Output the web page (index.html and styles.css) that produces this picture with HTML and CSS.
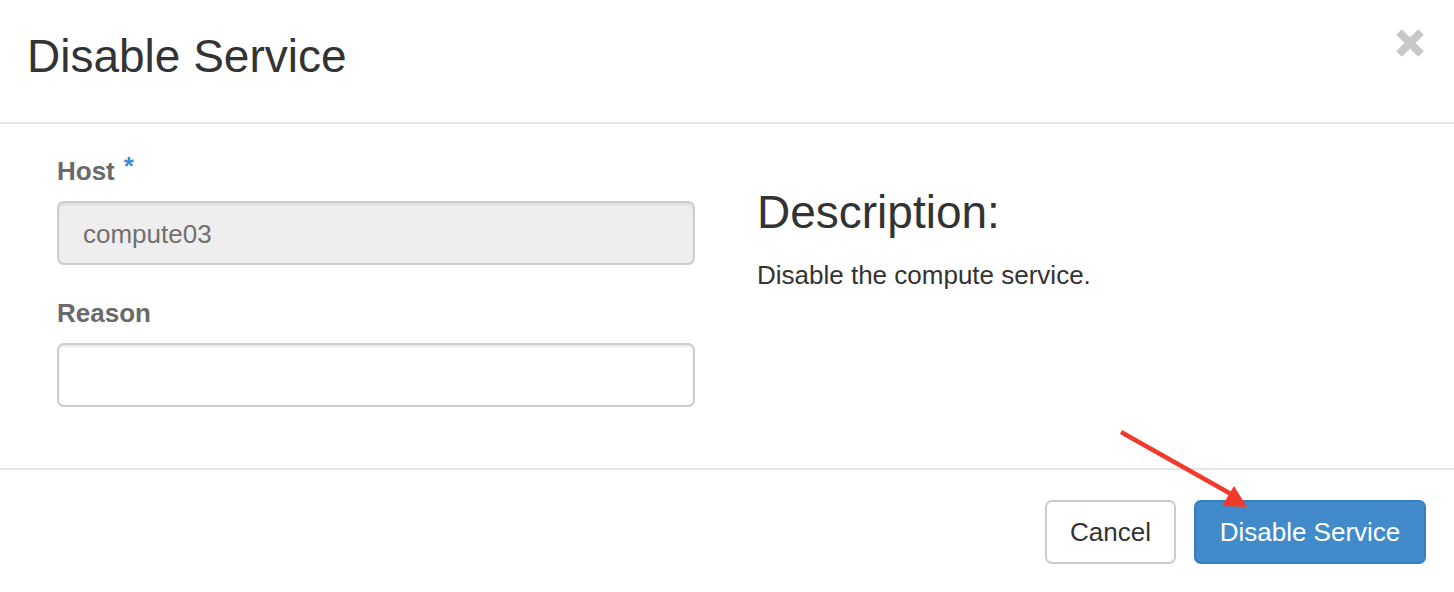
FILE: index.html
```html
<!DOCTYPE html>
<html lang="en">
<head>
<meta charset="utf-8">
<title>Disable Service</title>
<link rel="stylesheet" href="styles.css">
</head>
<body>
<div class="modal">
  <div class="modal-header">
    <h3 class="modal-title">Disable Service</h3>
    <button class="close" type="button" aria-label="Close">
      <svg width="28" height="28" viewBox="0 0 28 28">
        <line x1="3" y1="3" x2="25" y2="25" />
        <line x1="25" y1="3" x2="3" y2="25" />
      </svg>
    </button>
  </div>
  <div class="modal-body">
    <div class="left">
      <div class="form-group">
        <label class="control-label">Host<span class="req">*</span></label>
        <input class="form-control disabled" type="text" value="compute03" disabled>
      </div>
      <div class="form-group reason">
        <label class="control-label">Reason</label>
        <input class="form-control" type="text">
      </div>
    </div>
    <div class="right">
      <h3 class="desc-title">Description:</h3>
      <p class="desc-text">Disable the compute service.</p>
    </div>
  </div>
  <div class="modal-footer">
    <button class="btn btn-default" type="button">Cancel</button>
    <button class="btn btn-primary" type="button">Disable Service</button>
  </div>
  <svg class="annotation" width="1454" height="592" viewBox="0 0 1454 592">
    <line x1="1121" y1="432" x2="1231" y2="494" />
    <polygon points="1234,486 1222,506 1247,507" />
  </svg>
</div>
</body>
</html>
```

FILE: styles.css
```css
* {
  box-sizing: border-box;
}

html, body {
  margin: 0;
  padding: 0;
  background: #ffffff;
}

body {
  font-family: "Liberation Sans", Arial, Helvetica, sans-serif;
  color: #333333;
}

.modal {
  position: relative;
  width: 1454px;
  height: 592px;
  background: #ffffff;
  display: flex;
  flex-direction: column;
}

.modal-header {
  height: 124px;
  flex: none;
  display: flex;
  justify-content: space-between;
  align-items: flex-start;
  padding: 0 30px 0 27px;
  border-bottom: 2px solid #e5e5e5;
}

.modal-title {
  margin: 33px 0 0 0;
  font-size: 46px;
  line-height: 46px;
  font-weight: normal;
  color: #333333;
}

.close {
  margin-top: 29px;
  padding: 0;
  border: 0;
  background: transparent;
  width: 28px;
  height: 28px;
  display: block;
}

.close svg {
  display: block;
}

.close line {
  stroke: #c8c8c8;
  stroke-width: 8;
  stroke-linecap: butt;
}

.modal-body {
  height: 344px;
  flex: none;
  display: flex;
  gap: 62px;
  padding: 32px 28px 0 57px;
}

.left {
  width: 638px;
  flex: none;
}

.right {
  flex: 1;
}

.form-group {
  display: flex;
  flex-direction: column;
}

.form-group.reason {
  margin-top: 33px;
}

.control-label {
  font-size: 26px;
  line-height: 30px;
  font-weight: bold;
  color: #6a6a6a;
  margin-bottom: 15px;
}

.req {
  color: #3d8bd4;
  font-size: 26px;
  margin-left: 9px;
  position: relative;
  top: -5px;
}

.form-control {
  display: block;
  width: 638px;
  height: 64px;
  margin: 0;
  padding: 3px 24px 0 24px;
  font-family: "Liberation Sans", Arial, Helvetica, sans-serif;
  font-size: 26px;
  color: #555555;
  background: #ffffff;
  border: 2px solid #cccccc;
  border-radius: 7px;
  box-shadow: inset 0 2px 2px rgba(0, 0, 0, 0.075);
  outline: none;
}

.form-control.disabled {
  background: #eeeeee;
  color: #707070;
  -webkit-text-fill-color: #707070;
  opacity: 1;
}

.desc-title {
  margin: 33px 0 0 0;
  font-size: 46px;
  line-height: 46px;
  font-weight: normal;
  color: #333333;
}

.desc-text {
  margin: 25px 0 0 0;
  font-size: 26px;
  line-height: 30px;
  color: #333333;
}

.modal-footer {
  flex: 1;
  display: flex;
  justify-content: flex-end;
  align-items: flex-start;
  gap: 18px;
  padding: 30px 28px 0 0;
  border-top: 2px solid #e5e5e5;
}

.btn {
  height: 64px;
  padding: 0;
  font-family: "Liberation Sans", Arial, Helvetica, sans-serif;
  font-size: 26px;
  line-height: 60px;
  text-align: center;
  border-radius: 7px;
  border: 2px solid transparent;
}

.btn-default {
  width: 131px;
  background: #ffffff;
  border-color: #cccccc;
  color: #333333;
}

.btn-primary {
  width: 232px;
  background: #428bca;
  border-color: #357ebd;
  color: #ffffff;
}

.annotation {
  position: absolute;
  left: 0;
  top: 0;
  pointer-events: none;
}

.annotation line {
  stroke: #f03a2b;
  stroke-width: 4.5;
}

.annotation polygon {
  fill: #f03a2b;
}
```
